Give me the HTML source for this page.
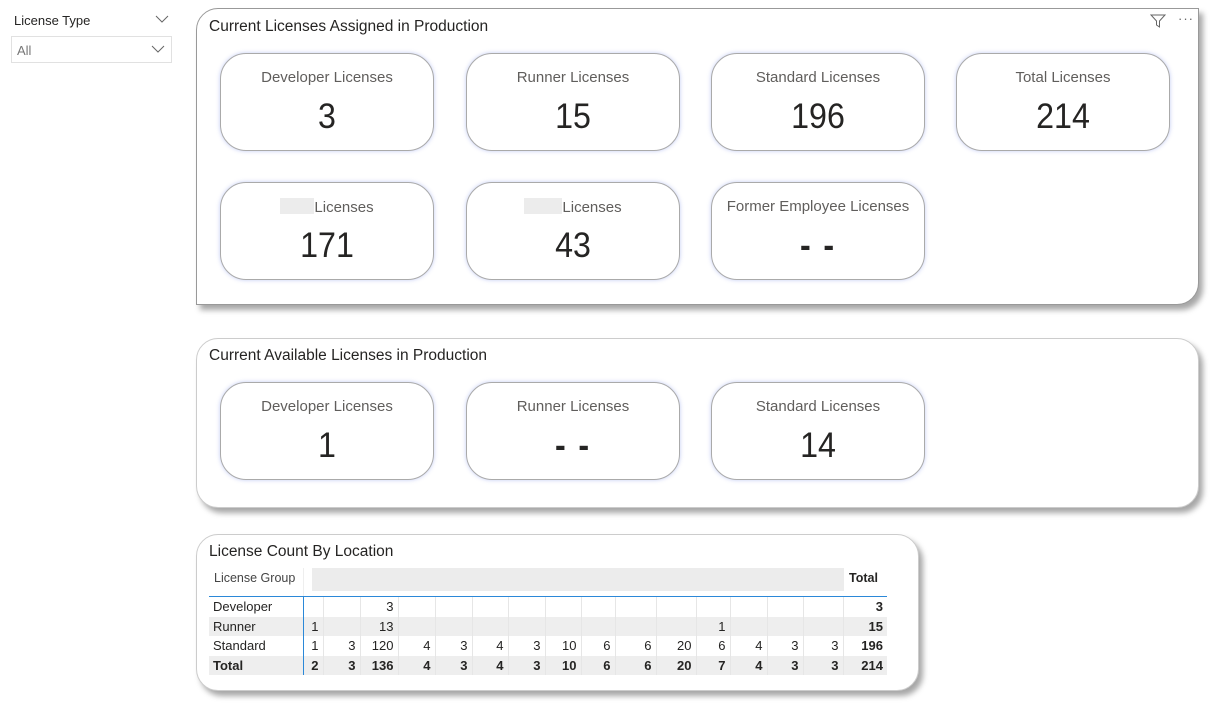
<!DOCTYPE html>
<html><head><style>
*{box-sizing:border-box;margin:0;padding:0}
body{width:1220px;height:706px;background:#fff;font-family:"Liberation Sans",sans-serif;position:relative;overflow:hidden;color:#252423}
.abs{position:absolute}
.panel{position:absolute;background:#fff;border-radius:22px;box-shadow:4px 5px 6px rgba(0,0,0,.35);border:1px solid #ccc}
.ptitle{position:absolute;left:13px;top:10px;font-size:15.5px;color:#252423}
.card{position:absolute;width:214px;height:98px;border:1px solid #aaa;border-radius:26px;background:#fff;box-shadow:0 0 4px rgba(120,140,230,.45);text-align:center}
.card .l{position:absolute;top:15px;left:0;right:0;font-size:15px;color:#605e5c}
.card .v{position:absolute;top:43px;left:0;right:0;font-size:35px;color:#252423;transform:scaleX(.92)}
.card .d{font-weight:bold;letter-spacing:2px}
.blur{display:inline-block;width:34px;height:16px;background:#ececec;vertical-align:-2px}
table{border-collapse:collapse;font-size:13px}
td{height:19.5px;padding:0 4px;text-align:right;border-right:1px solid #e6e6e6}
td:first-child{text-align:left;border-right:1px solid #2b88d8}
td:last-child{border-right:none;font-weight:bold}
tr.g td{background:#eeeeee}
tr.t td{font-weight:bold;background:#eeeeee}
</style></head><body>
<div class="abs" style="left:14px;top:13px;font-size:13px;color:#252423">License Type</div>
<svg class="abs" style="left:155px;top:14px" width="14" height="10"><path d="M1 2 L7 8 L13 2" fill="none" stroke="#666" stroke-width="1"/></svg>
<div class="abs" style="left:11px;top:36px;width:161px;height:27px;border:1px solid #e1e1e1"></div>
<div class="abs" style="left:17px;top:43px;font-size:13px;color:#777">All</div>
<svg class="abs" style="left:151px;top:44px" width="14" height="10"><path d="M1 2 L7 8 L13 2" fill="none" stroke="#666" stroke-width="1"/></svg>

<div class="panel" style="left:196px;top:8px;width:1003px;height:297px;border-color:#999;border-radius:22px 0 22px 0"></div>
<div class="ptitle abs" style="left:209px;top:18px">Current Licenses Assigned in Production</div>
<svg class="abs" style="left:1150px;top:14px" width="16" height="14"><path d="M1 1 H15 L9.5 7 V13 L6.5 11 V7 Z" fill="none" stroke="#666" stroke-width="1"/></svg>
<div class="abs" style="left:1178px;top:11px;font-size:13px;color:#666;letter-spacing:1px">···</div>
<div class="card" style="left:220px;top:53px"><div class="l">Developer Licenses</div><div class="v">3</div></div>
<div class="card" style="left:466px;top:53px"><div class="l">Runner Licenses</div><div class="v">15</div></div>
<div class="card" style="left:711px;top:53px"><div class="l">Standard Licenses</div><div class="v">196</div></div>
<div class="card" style="left:956px;top:53px"><div class="l">Total Licenses</div><div class="v">214</div></div>
<div class="card" style="left:220px;top:182px"><div class="l"><span class="blur"></span>Licenses</div><div class="v">171</div></div>
<div class="card" style="left:466px;top:182px"><div class="l"><span class="blur" style="width:38px"></span>Licenses</div><div class="v">43</div></div>
<div class="card" style="left:711px;top:182px"><div class="l">Former Employee Licenses</div><div class="v d">- -</div></div>

<div class="panel" style="left:196px;top:338px;width:1003px;height:170px"></div>
<div class="ptitle abs" style="left:209px;top:347px">Current Available Licenses in Production</div>
<div class="card" style="left:220px;top:382px"><div class="l">Developer Licenses</div><div class="v">1</div></div>
<div class="card" style="left:466px;top:382px"><div class="l">Runner Licenses</div><div class="v d">- -</div></div>
<div class="card" style="left:711px;top:382px"><div class="l">Standard Licenses</div><div class="v">14</div></div>

<div class="panel" style="left:196px;top:534px;width:723px;height:157px"></div>
<div class="ptitle abs" style="left:209px;top:543px">License Count By Location</div>
<div class="abs" style="left:214px;top:571px;font-size:12.5px;color:#444">License Group</div>
<div class="abs" style="left:303px;top:568px;width:1px;height:28px;background:#eee"></div>
<div class="abs" style="left:312px;top:568px;width:532px;height:23px;background:#ececec"></div>
<div class="abs" style="left:849px;top:571px;font-size:12.5px;font-weight:bold">Total</div>
<div class="abs" style="left:209px;top:596px;width:678px;height:1px;background:#2b88d8"></div>
<table class="abs" style="left:209px;top:597px;width:678px">
<colgroup><col style="width:94px"><col style="width:20px"><col style="width:37px"><col style="width:38px"><col style="width:37px"><col style="width:37px"><col style="width:36px"><col style="width:37px"><col style="width:36px"><col style="width:34px"><col style="width:41px"><col style="width:40px"><col style="width:34px"><col style="width:37px"><col style="width:36px"><col style="width:40px"><col style="width:44px"></colgroup>
<tr><td>Developer</td><td></td><td></td><td>3</td><td></td><td></td><td></td><td></td><td></td><td></td><td></td><td></td><td></td><td></td><td></td><td></td><td>3</td></tr>
<tr class="g"><td>Runner</td><td>1</td><td></td><td>13</td><td></td><td></td><td></td><td></td><td></td><td></td><td></td><td></td><td>1</td><td></td><td></td><td></td><td>15</td></tr>
<tr><td>Standard</td><td>1</td><td>3</td><td>120</td><td>4</td><td>3</td><td>4</td><td>3</td><td>10</td><td>6</td><td>6</td><td>20</td><td>6</td><td>4</td><td>3</td><td>3</td><td>196</td></tr>
<tr class="t"><td>Total</td><td>2</td><td>3</td><td>136</td><td>4</td><td>3</td><td>4</td><td>3</td><td>10</td><td>6</td><td>6</td><td>20</td><td>7</td><td>4</td><td>3</td><td>3</td><td>214</td></tr>
</table>
</body></html>
